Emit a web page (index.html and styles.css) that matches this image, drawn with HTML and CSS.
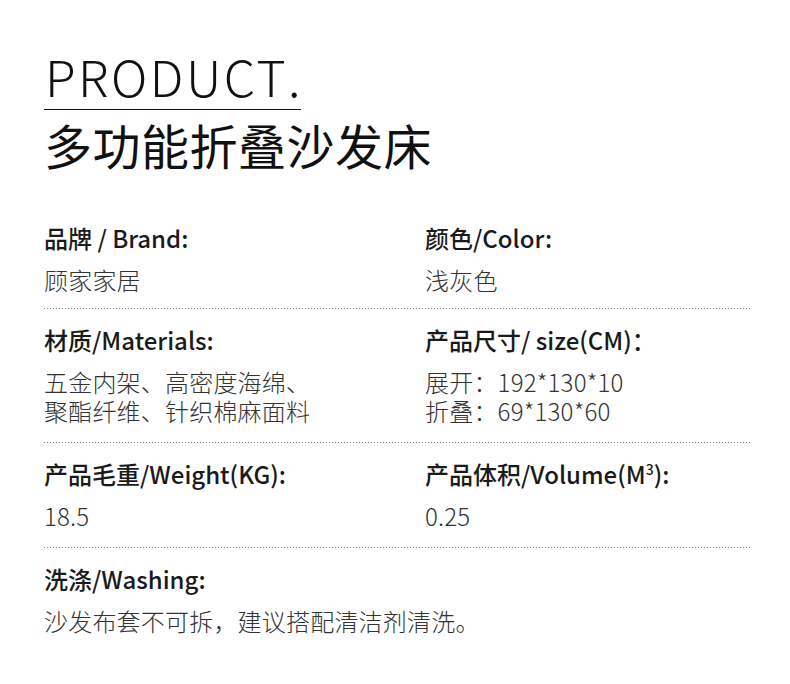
FILE: index.html
```html
<!DOCTYPE html>
<html lang="zh-CN">
<head>
<meta charset="utf-8">
<title>PRODUCT</title>
<link rel="stylesheet" href="styles.css">
</head>
<body>
<main class="page">
  <header class="head">
    <div class="brandmark">PRODUCT<span class="dot">.</span></div>
    <h1 class="title">多功能折叠沙发床</h1>
  </header>
  <section class="specs">
    <div class="row">
      <div class="cell">
        <div class="label">品牌 / Brand:</div>
        <div class="value">顾家家居</div>
      </div>
      <div class="cell">
        <div class="label">颜色/Color:</div>
        <div class="value">浅灰色</div>
      </div>
    </div>
    <div class="row">
      <div class="cell">
        <div class="label">材质/Materials:</div>
        <div class="value">
          <div class="line">五金内架、高密度海绵、</div>
          <div class="line">聚酯纤维、针织棉麻面料</div>
        </div>
      </div>
      <div class="cell">
        <div class="label">产品尺寸/ size(CM)：</div>
        <div class="value">
          <div class="line">展开：192*130*10</div>
          <div class="line">折叠：69*130*60</div>
        </div>
      </div>
    </div>
    <div class="row">
      <div class="cell">
        <div class="label">产品毛重/Weight(KG):</div>
        <div class="value">18.5</div>
      </div>
      <div class="cell">
        <div class="label">产品体积/Volume(M<sup class="sup">3</sup>):</div>
        <div class="value">0.25</div>
      </div>
    </div>
    <div class="row row-last">
      <div class="cell cell-wide">
        <div class="label">洗涤/Washing:</div>
        <div class="value">沙发布套不可拆，建议搭配清洁剂清洗。</div>
      </div>
    </div>
  </section>
</main>
</body>
</html>
```
FILE: styles.css
```css
html, body {
  margin: 0;
  padding: 0;
  background: #ffffff;
}

body {
  font-family: "Noto Sans CJK SC", "Noto Sans", sans-serif;
  color: #111;
}

.page {
  width: 706px;
  padding: 50px 0 0 44px;
}

.head {
  display: flex;
  flex-direction: column;
  align-items: flex-start;
}

.brandmark {
  font-size: 50px;
  line-height: 50px;
  font-weight: 300;
  letter-spacing: 2.5px;
  padding: 0 0 9px 1px;
  border-bottom: 1px solid #111;
  color: #111;
}

.dot {
  letter-spacing: 0;
}

.title {
  margin: 10px 0 0 0;
  font-size: 48px;
  line-height: 48px;
  font-weight: 400;
  letter-spacing: 0.5px;
  color: #111;
}

.specs {
  margin-top: 54px;
}

.row {
  display: grid;
  grid-template-columns: 381px 1fr;
  padding: 15px 0 18px 0;
  background-image: linear-gradient(to right, #8a8a8a 1px, transparent 1px);
  background-size: 3px 1px;
  background-repeat: repeat-x;
  background-position: left bottom;
}

.row:first-child {
  padding-top: 0;
  padding-bottom: 15px;
}

.row-last {
  background-image: none;
}

.cell-wide {
  grid-column: 1 / -1;
}

.label {
  font-size: 24px;
  line-height: 32px;
  font-weight: 500;
  color: #1a1a1a;
}

.sup {
  font-size: 14px;
  line-height: 0;
  vertical-align: 9px;
}

.value {
  margin-top: 11px;
  font-size: 24px;
  line-height: 29px;
  font-weight: 300;
  color: #333;
  letter-spacing: 0.2px;
}

.line {
  height: 29px;
}
```
